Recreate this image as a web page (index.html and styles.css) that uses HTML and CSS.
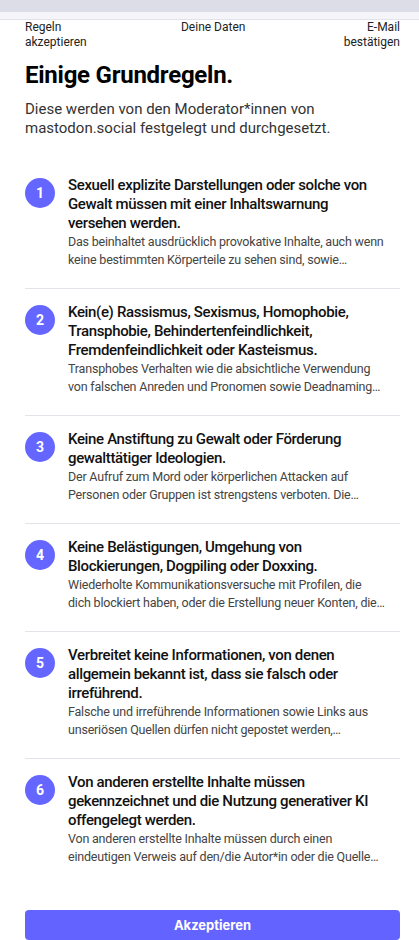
FILE: index.html
```html
<!DOCTYPE html>
<html lang="de">

<head>
  <meta charset="UTF-8">
  <meta name="viewport" content="width=device-width, initial-scale=1.0">
  <title>Einige Grundregeln</title>
  <link rel="stylesheet" href="styles.css">
</head>

<body>
  <div class="progress-bar"></div>

  <main class="signup">
    <ol class="steps">
      <li class="step step-left">Regeln<br>akzeptieren</li>
      <li class="step step-center">Deine Daten</li>
      <li class="step step-right">E-Mail<br>bestätigen</li>
    </ol>

    <h1>Einige Grundregeln.</h1>
    <p class="lead">Diese werden von den Moderator*innen von mastodon.social festgelegt und durchgesetzt.</p>

    <ol class="rules">
      <li class="rule">
        <span class="rule-number">1</span>
        <div class="rule-body">
          <div class="rule-title">Sexuell explizite Darstellungen oder solche von Gewalt müssen mit einer Inhaltswarnung versehen werden.</div>
          <p class="rule-text">Das beinhaltet ausdrücklich provokative Inhalte, auch wenn<br>keine bestimmten Körperteile zu sehen sind, sowie…</p>
        </div>
      </li>
      <li class="rule">
        <span class="rule-number">2</span>
        <div class="rule-body">
          <div class="rule-title">Kein(e) Rassismus, Sexismus, Homophobie, Transphobie, Behindertenfeindlichkeit, Fremdenfeindlichkeit oder Kasteismus.</div>
          <p class="rule-text">Transphobes Verhalten wie die absichtliche Verwendung<br>von falschen Anreden und Pronomen sowie Deadnaming…</p>
        </div>
      </li>
      <li class="rule">
        <span class="rule-number">3</span>
        <div class="rule-body">
          <div class="rule-title">Keine Anstiftung zu Gewalt oder Förderung gewalttätiger Ideologien.</div>
          <p class="rule-text">Der Aufruf zum Mord oder körperlichen Attacken auf<br>Personen oder Gruppen ist strengstens verboten. Die…</p>
        </div>
      </li>
      <li class="rule">
        <span class="rule-number">4</span>
        <div class="rule-body">
          <div class="rule-title">Keine Belästigungen, Umgehung von Blockierungen, Dogpiling oder Doxxing.</div>
          <p class="rule-text">Wiederholte Kommunikationsversuche mit Profilen, die<br>dich blockiert haben, oder die Erstellung neuer Konten, die…</p>
        </div>
      </li>
      <li class="rule">
        <span class="rule-number">5</span>
        <div class="rule-body">
          <div class="rule-title">Verbreitet keine Informationen, von denen allgemein bekannt ist, dass sie falsch oder irreführend.</div>
          <p class="rule-text">Falsche und irreführende Informationen sowie Links aus<br>unseriösen Quellen dürfen nicht gepostet werden,…</p>
        </div>
      </li>
      <li class="rule">
        <span class="rule-number">6</span>
        <div class="rule-body">
          <div class="rule-title">Von anderen erstellte Inhalte müssen gekennzeichnet und die Nutzung generativer KI offengelegt werden.</div>
          <p class="rule-text">Von anderen erstellte Inhalte müssen durch einen<br>eindeutigen Verweis auf den/die Autor*in oder die Quelle…</p>
        </div>
      </li>
    </ol>

    <button class="accept-button">Akzeptieren</button>
  </main>
</body>

</html>
```

FILE: styles.css
```css
* {
  box-sizing: border-box;
  margin: 0;
  padding: 0;
}

body {
  font-family: Roboto, 'Liberation Sans', sans-serif;
  background: #fff;
  color: #000;
}

.progress-bar {
  height: 20px;
  background: #f4f4f9;
  border-top: 12px solid #dcdde6;
  border-bottom: 1px solid #e2e2ec;
}

.signup {
  padding: 0 19px 0 25px;
}

/* steps */
.steps {
  list-style: none;
  display: flex;
  justify-content: space-between;
  font-size: 12px;
  line-height: 15px;
  color: #222;
}

.step-center {
  text-align: center;
  margin-left: -4px;
}

.step-right {
  text-align: right;
}

h1 {
  margin-top: 11px;
  font-size: 24px;
  line-height: 29px;
  font-weight: 700;
  letter-spacing: -0.25px;
  color: #000;
}

.lead {
  margin-top: 10px;
  font-size: 15px;
  line-height: 19px;
  color: #333;
}

/* rules */
.rules {
  list-style: none;
  margin-top: 24px;
}

.rule {
  display: flex;
  gap: 13px;
  padding: 14px 0 19px;
  border-bottom: 1px solid #e3e3ea;
}

.rule:last-child {
  border-bottom: none;
}

.rule-number {
  flex: none;
  width: 30px;
  height: 30px;
  margin-top: 2px;
  border-radius: 50%;
  background: #6566ff;
  color: #fff;
  font-size: 14px;
  font-weight: 700;
  display: flex;
  align-items: center;
  justify-content: center;
}

.rule-body {
  flex: 1;
}

.rule-title {
  padding-right: 26px;
  font-size: 15px;
  line-height: 19px;
  font-weight: 500;
  letter-spacing: -0.35px;
  color: #111;
}

.rule-text {
  font-size: 12.5px;
  line-height: 18px;
  letter-spacing: -0.2px;
  color: #444;
  white-space: nowrap;
}

.accept-button {
  display: block;
  width: 100%;
  margin-top: 25px;
  height: 30px;
  border: none;
  border-radius: 4px;
  background: #6364ff;
  color: #fff;
  font-family: Inter, 'Liberation Sans', sans-serif;
  font-size: 13px;
  font-weight: 700;
}
```
